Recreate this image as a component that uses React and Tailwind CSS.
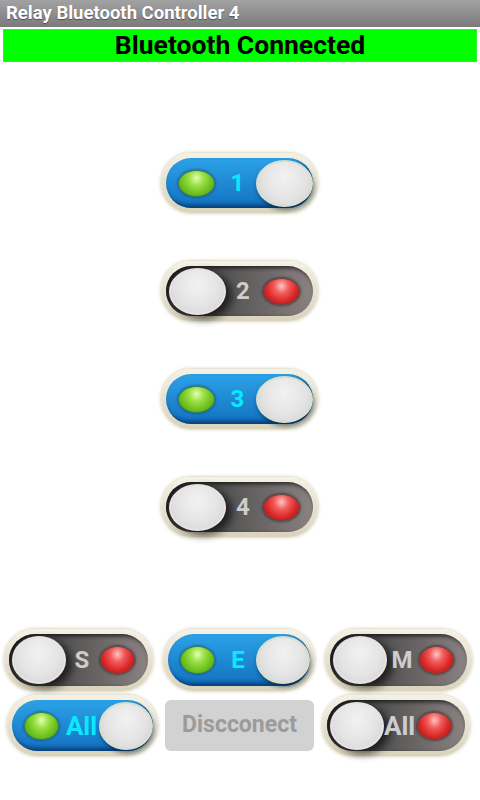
import React from "react";

const FONT = { fontFamily: "Roboto, 'Liberation Sans', sans-serif" };

const SIZES = {
  lg: { knob: "h-[47px] w-[57px]", led: "h-[27px] w-[37px]" },
  sm: { knob: "h-[48px] w-[54px]", led: "h-[28px] w-[35px]" },
};

function Led({ on, size }) {
  const s = SIZES[size].led;
  return on ? (
    <span className={`block shrink-0 rounded-[50%] border border-[#3d7f52] bg-[radial-gradient(ellipse_at_50%_28%,#e4ffb0_0%,#9be046_30%,#6cc21e_62%,#4c9412_100%)] shadow-[0_0_2px_1px_rgba(20,60,90,0.45)] ${s}`} />
  ) : (
    <span className={`block shrink-0 rounded-[50%] border border-[#6a4444] bg-[radial-gradient(ellipse_at_50%_28%,#ffc4c4_0%,#f25a5a_30%,#d92626_62%,#a11414_100%)] shadow-[0_0_2px_1px_rgba(40,20,20,0.5)] ${s}`} />
  );
}

function Knob({ on, size }) {
  return (
    <span
      className={`block shrink-0 rounded-[50%] border-2 bg-[radial-gradient(ellipse_at_50%_35%,#f2f2f2_0%,#e4e4e4_55%,#cfcfcf_100%)] ${SIZES[size].knob} ${
        on
          ? "border-[#d9dfca] shadow-[1px_3px_4px_rgba(0,30,60,0.55)]"
          : "border-[#e8e2e2] shadow-[6px_4px_8px_rgba(0,0,0,0.65)]"
      }`}
    />
  );
}

function Toggle({ on, label, className, size = "lg", labelClass = "text-[24px]" }) {
  return (
    <div
      className={`shrink-0 rounded-full bg-gradient-to-b from-[#f4f1e6] to-[#d9d3bc] p-[5px] shadow-[0_0_3px_1px_rgba(205,198,170,0.7)] ${className}`}
    >
      {on ? (
        <div className="flex h-full items-center rounded-full bg-gradient-to-b from-[#2ca2e8] to-[#1371c0] pl-[12px] pr-0 shadow-[inset_-3px_-3px_4px_rgba(5,45,95,0.8)]">
          <Led on size={size} />
          <span className={`flex-1 pl-[5px] text-center font-bold leading-none text-[#0ae8ff] ${labelClass}`}>{label}</span>
          <Knob on size={size} />
        </div>
      ) : (
        <div className="flex h-full items-center rounded-full bg-gradient-to-r from-[#3a3a3a] via-[#5c5a5a] to-[#8c8282] pl-[3px] pr-[13px] shadow-[inset_2px_2px_4px_rgba(0,0,0,0.7)]">
          <Knob size={size} />
          <span className={`flex-1 pr-[2px] text-center font-bold leading-none text-[#cdcdcd] ${labelClass}`}>{label}</span>
          <Led size={size} />
        </div>
      )}
    </div>
  );
}

export default function App() {
  return (
    <div className="flex h-[800px] w-[480px] flex-col bg-white" style={FONT}>
      <div className="flex h-[27px] items-center bg-gradient-to-b from-[#a2a2a2] to-[#7a7a7a] px-[6px]">
        <span className="text-[18.5px] font-bold leading-none text-white [text-shadow:0_1px_1px_rgba(0,0,0,0.4)]">
          Relay Bluetooth Controller 4
        </span>
      </div>
      <div className="mx-[3px] mt-[2px] flex h-[33px] items-center justify-center border border-[#33ee33] bg-[#00ff00]">
        <span className="text-[26.5px] font-bold leading-none text-black">Bluetooth Connected</span>
      </div>

      <div className="mt-[91px] flex flex-col items-center gap-[48px] pr-[2px]">
        <Toggle on label="1" className="h-[60px] w-[157px]" />
        <Toggle label="2" className="h-[60px] w-[157px]" />
        <Toggle on label="3" className="h-[60px] w-[157px]" />
        <Toggle label="4" className="h-[60px] w-[157px]" />
      </div>

      <div className="mt-[92px] flex items-center pl-[4px]">
        <Toggle size="sm" label="S" className="h-[62px] w-[149px]" />
        <Toggle size="sm" on label="E" className="ml-[10px] h-[62px] w-[152px]" />
        <Toggle size="sm" label="M" className="ml-[10px] h-[62px] w-[147px]" />
      </div>
      <div className="mt-[4px] flex items-center pl-[7px]">
        <Toggle size="sm" on label="All" labelClass="text-[26px]" className="h-[61px] w-[151px]" />
        <button className="ml-[7px] flex h-[51px] w-[149px] items-center justify-center rounded-[6px] bg-[#d2d2d2] text-[23px] font-bold text-[#9b9b9b]">
          Discconect
        </button>
        <Toggle size="sm" label="All" labelClass="text-[26px]" className="ml-[8px] h-[61px] w-[148px]" />
      </div>
    </div>
  );
}
